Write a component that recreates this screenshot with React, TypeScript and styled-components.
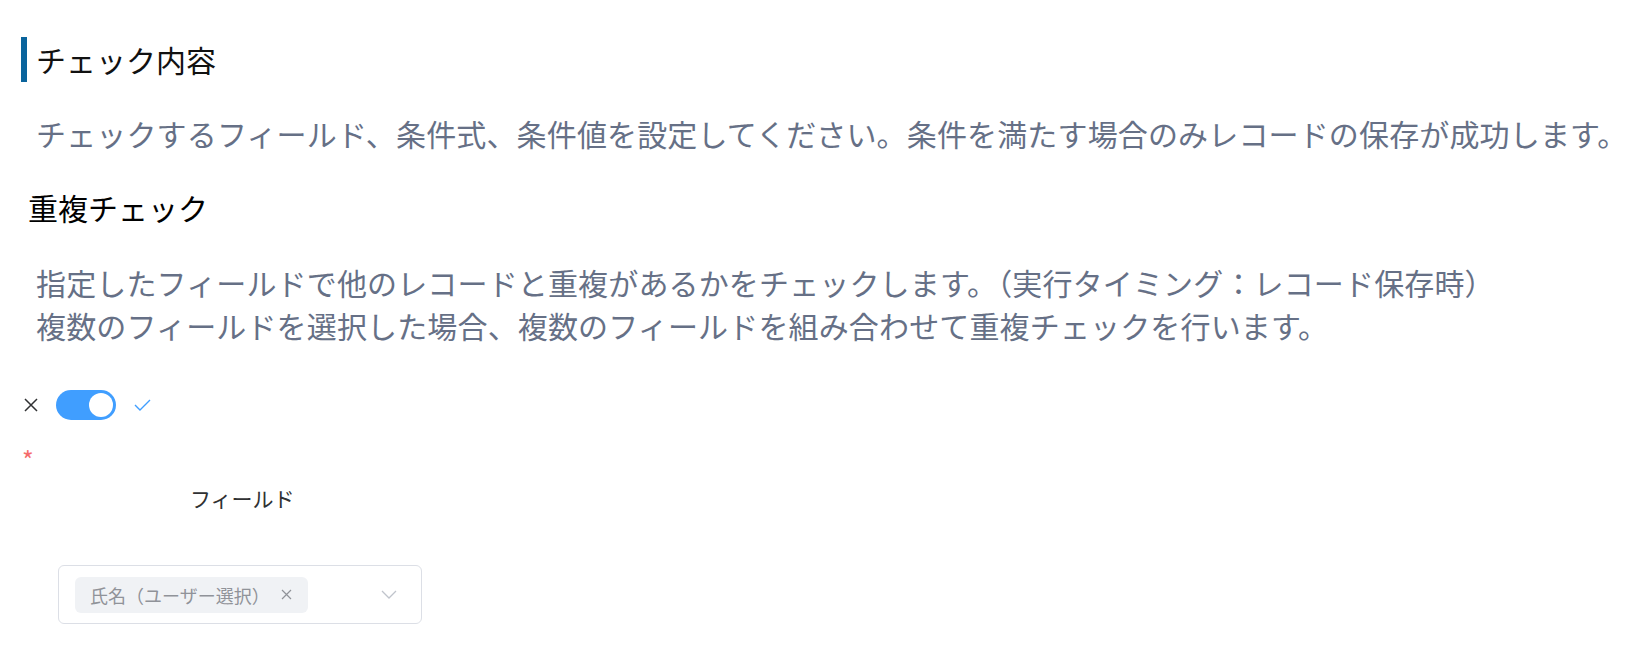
import styled, { createGlobalStyle } from 'styled-components';

const GlobalStyle = createGlobalStyle`
  html, body {
    margin: 0;
    padding: 0;
    background: #fff;
  }
  body {
    font-family: "Noto Sans CJK JP", "Noto Sans", sans-serif;
  }
`;

const Page = styled.div`
  padding: 37px 0 0 21px;
  font-family: "Noto Sans CJK JP", "Noto Sans", sans-serif;
`;

const SectionTitle = styled.h2`
  margin: 0;
  height: 45px;
  line-height: 45px;
  border-left: 6px solid #0a649c;
  padding-left: 9px;
  font-size: 30px;
  font-weight: 400;
  color: #111;
`;

const Description = styled.p<{ $top: number }>`
  margin: ${(p) => p.$top}px 0 0 15px;
  font-size: 30px;
  line-height: 43px;
  letter-spacing: 0.15px;
  color: #667086;
  white-space: nowrap;
`;

const SubTitle = styled.h3`
  margin: 31px 0 0 7px;
  font-size: 30px;
  line-height: 43px;
  font-weight: 400;
  color: #000;
`;

const SwitchRow = styled.div`
  display: flex;
  align-items: center;
  gap: 18px;
  height: 30px;
  margin: 43px 0 0 3px;
`;

const SwitchLabel = styled.span<{ $active?: boolean }>`
  display: flex;
  align-items: center;
  color: ${(p) => (p.$active ? '#409eff' : '#303133')};
`;

const SwitchCore = styled.span<{ $on: boolean }>`
  position: relative;
  display: inline-block;
  width: 60px;
  height: 30px;
  border-radius: 15px;
  background: ${(p) => (p.$on ? '#409eff' : '#dcdfe6')};
`;

const SwitchKnob = styled.span<{ $on: boolean }>`
  position: absolute;
  top: 3px;
  left: ${(p) => (p.$on ? '33px' : '3px')};
  width: 24px;
  height: 24px;
  border-radius: 50%;
  background: #fff;
`;

const RequiredMark = styled.div`
  margin: 29px 0 0 1px;
  height: 21px;
  font-size: 25px;
  line-height: 21px;
  color: #f56c6c;
`;

const FieldLabel = styled.div`
  margin: 13px 0 0 169px;
  font-size: 21px;
  line-height: 30px;
  color: #303133;
`;

const SelectBox = styled.div`
  display: flex;
  align-items: center;
  box-sizing: border-box;
  width: 364px;
  height: 59px;
  margin: 52px 0 0 37px;
  padding: 0 24px 0 16px;
  border: 1.5px solid #dcdfe6;
  border-radius: 6px;
  background: #fff;
`;

const Tag = styled.span`
  display: inline-flex;
  align-items: center;
  gap: 8px;
  height: 36px;
  padding: 0 12px 0 15px;
  border-radius: 6px;
  background: #f0f2f5;
  color: #909399;
  font-size: 18px;
  white-space: nowrap;
`;

const TagClose = styled.span`
  display: flex;
  align-items: center;
  justify-content: center;
  width: 18px;
  height: 18px;
`;

const Arrow = styled.span`
  display: flex;
  margin-left: auto;
`;

const CloseIcon = ({ size, color, width = 1.4 }: { size: number; color: string; width?: number }) => (
  <svg width={size} height={size} viewBox={`0 0 ${size} ${size}`} fill="none">
    <path d={`M1 1 L${size - 1} ${size - 1} M${size - 1} 1 L1 ${size - 1}`} stroke={color} strokeWidth={width} />
  </svg>
);

const App = () => {
  const enabled = true;
  return (
    <Page>
      <GlobalStyle />
      <SectionTitle>チェック内容</SectionTitle>
      <Description $top={30}>
        チェックするフィールド、条件式、条件値を設定してください。条件を満たす場合のみレコードの保存が成功します。
      </Description>
      <SubTitle>重複チェック</SubTitle>
      <Description $top={32}>
        指定したフィールドで他のレコードと重複があるかをチェックします。（実行タイミング：レコード保存時）
        <br />
        複数のフィールドを選択した場合、複数のフィールドを組み合わせて重複チェックを行います。
      </Description>

      <SwitchRow>
        <SwitchLabel>
          <CloseIcon size={14} color="#303133" width={1.5} />
        </SwitchLabel>
        <SwitchCore $on={enabled}>
          <SwitchKnob $on={enabled} />
        </SwitchCore>
        <SwitchLabel $active>
          <svg width="17" height="12" viewBox="0 0 17 12" fill="none">
            <path d="M1 6 L6 11 L16 1" stroke="#409eff" strokeWidth="1.4" />
          </svg>
        </SwitchLabel>
      </SwitchRow>

      <RequiredMark>*</RequiredMark>
      <FieldLabel>フィールド</FieldLabel>

      <SelectBox>
        <Tag>
          氏名（ユーザー選択）
          <TagClose>
            <CloseIcon size={11} color="#909399" width={1.2} />
          </TagClose>
        </Tag>
        <Arrow>
          <svg width="16" height="9" viewBox="0 0 16 9" fill="none">
            <path d="M1 1 L8 8 L15 1" stroke="#c0c4cc" strokeWidth="1.3" />
          </svg>
        </Arrow>
      </SelectBox>
    </Page>
  );
};

export default App;
